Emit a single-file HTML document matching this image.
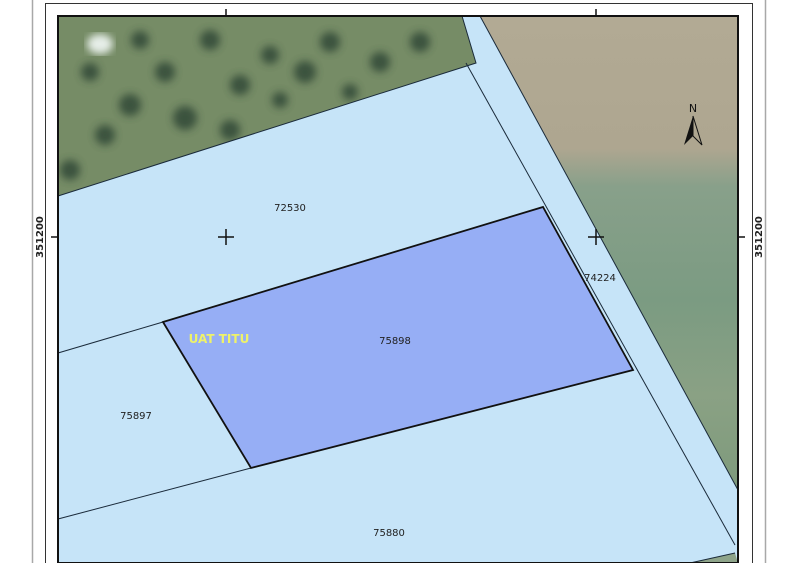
<!DOCTYPE html>
<html><head><meta charset="utf-8"><style>
html,body{margin:0;padding:0;background:#fff;width:795px;height:563px;overflow:hidden}
svg{display:block}
text{font-family:"DejaVu Sans","Liberation Sans",sans-serif}
</style></head><body>
<svg width="795" height="563" viewBox="0 0 795 563">
<defs>
<linearGradient id="fld" x1="0" y1="0" x2="0" y2="1">
<stop offset="0" stop-color="#b2aa94"/><stop offset="0.28" stop-color="#aea690"/>
<stop offset="0.36" stop-color="#88a08a"/><stop offset="0.6" stop-color="#7b9b82"/>
<stop offset="0.8" stop-color="#8aa184"/><stop offset="1" stop-color="#7e9a7c"/>
</linearGradient>
<filter id="bl"><feGaussianBlur stdDeviation="4"/></filter>
</defs>
<rect width="795" height="563" fill="#fff"/>
<line x1="32.5" y1="0" x2="32.5" y2="563" stroke="#a8a8a8" stroke-width="1.5"/>
<line x1="765.5" y1="0" x2="765.5" y2="563" stroke="#a8a8a8" stroke-width="1.5"/>
<rect x="45.5" y="3.5" width="707" height="570" fill="none" stroke="#333" stroke-width="1"/>
<rect x="58" y="16" width="680" height="547" fill="#c6e4f8"/>
<clipPath id="oc"><polygon points="58,16 462,16 476,63 58,196"/></clipPath>
<g clip-path="url(#oc)">
<rect x="58" y="16" width="420" height="180" fill="#768c66"/>
<g fill="#334a38" filter="url(#bl)" opacity="0.85">
<circle cx="130" cy="105" r="11"/><circle cx="185" cy="118" r="12"/><circle cx="240" cy="85" r="10"/>
<circle cx="305" cy="72" r="11"/><circle cx="330" cy="42" r="10"/><circle cx="270" cy="55" r="9"/>
<circle cx="165" cy="72" r="10"/><circle cx="210" cy="40" r="10"/><circle cx="380" cy="62" r="10"/>
<circle cx="105" cy="135" r="10"/><circle cx="90" cy="72" r="9"/><circle cx="420" cy="42" r="10"/>
<circle cx="230" cy="130" r="10"/><circle cx="350" cy="92" r="8"/><circle cx="140" cy="40" r="9"/>
<circle cx="70" cy="170" r="10"/><circle cx="280" cy="100" r="8"/>
</g>
<ellipse cx="100" cy="44" rx="13" ry="10" fill="#e6eee8" filter="url(#bl)"/>
</g>
<polygon points="480,16 738,16 738,490" fill="url(#fld)"/>
<polygon points="690,563 735,553 738,563" fill="#8ea48a"/>
<g stroke="#1a2a3a" fill="none" stroke-width="1">
<polyline points="58,196 476,63 462,16"/>
<line x1="480" y1="16" x2="738" y2="490"/>
<line x1="466" y1="63" x2="735" y2="545"/>
<line x1="58" y1="353" x2="163" y2="322"/>
<line x1="58" y1="519" x2="251" y2="468"/>
<line x1="690" y1="563" x2="735" y2="553"/>
</g>
<polygon points="163,322 543,207 633,370 251,468" fill="#96aef5" stroke="#111" stroke-width="1.8"/>
<rect x="58" y="16" width="680" height="547" fill="none" stroke="#111" stroke-width="2"/>
<g stroke="#111" stroke-width="1.5">
<line x1="226" y1="9" x2="226" y2="16"/><line x1="596" y1="9" x2="596" y2="16"/>
<line x1="51" y1="237" x2="58" y2="237"/><line x1="738" y1="237" x2="745" y2="237"/>
<line x1="218" y1="237" x2="234" y2="237"/><line x1="226" y1="229" x2="226" y2="245"/>
<line x1="588" y1="237" x2="604" y2="237"/><line x1="596" y1="229" x2="596" y2="245"/>
</g>
<text transform="translate(43,237) rotate(-90)" text-anchor="middle" font-size="10" font-weight="bold" fill="#222">351200</text>
<text transform="translate(762,237) rotate(-90)" text-anchor="middle" font-size="10" font-weight="bold" fill="#222">351200</text>
<g font-size="10" fill="#222" text-anchor="middle">
<text x="290" y="211">72530</text>
<text x="600" y="281">74224</text>
<text x="395" y="344">75898</text>
<text x="136" y="419">75897</text>
<text x="389" y="536">75880</text>
</g>
<text x="219" y="343" text-anchor="middle" font-size="12" font-weight="bold" fill="#eef26a">UAT TITU</text>
<text x="693" y="112" text-anchor="middle" font-size="11" fill="#111">N</text>
<polygon points="693,116 684,145 693,136" fill="#111"/>
<polygon points="693,116 702,145 693,136" fill="none" stroke="#111" stroke-width="1"/>
</svg>
</body></html>
